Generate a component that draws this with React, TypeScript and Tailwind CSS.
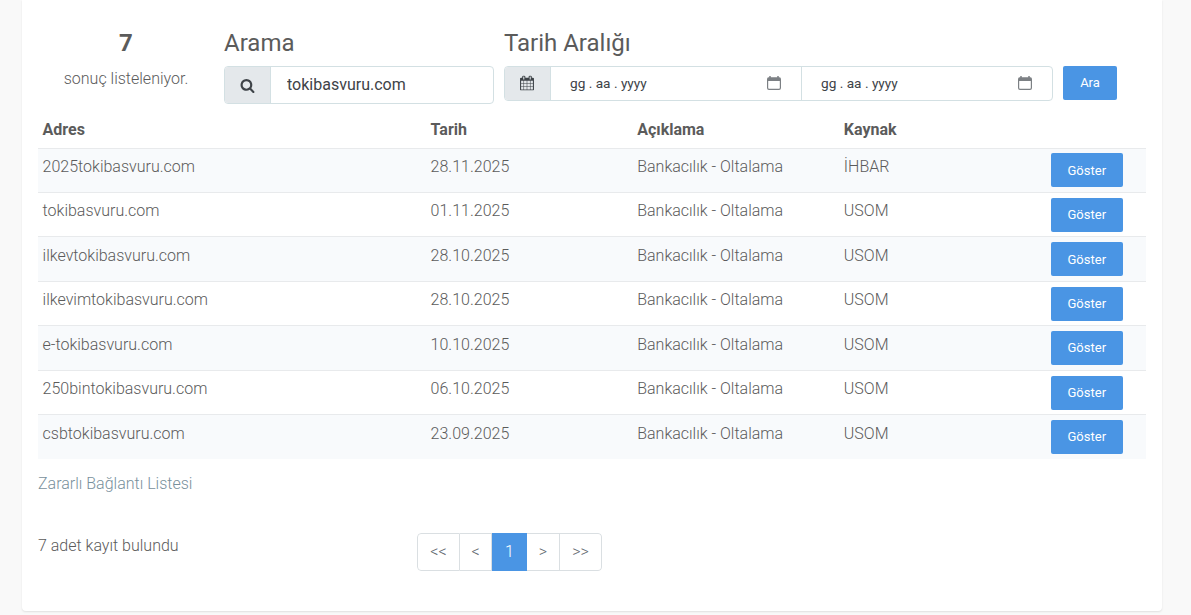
import React, { useState } from 'react';

const BLUE = 'bg-[#4a95e4]';

const rows = [
  { address: '2025tokibasvuru.com', date: '28.11.2025', source: 'İHBAR' },
  { address: 'tokibasvuru.com', date: '01.11.2025', source: 'USOM' },
  { address: 'ilkevtokibasvuru.com', date: '28.10.2025', source: 'USOM' },
  { address: 'ilkevimtokibasvuru.com', date: '28.10.2025', source: 'USOM' },
  { address: 'e-tokibasvuru.com', date: '10.10.2025', source: 'USOM' },
  { address: '250bintokibasvuru.com', date: '06.10.2025', source: 'USOM' },
  { address: 'csbtokibasvuru.com', date: '23.09.2025', source: 'USOM' },
];

const pages = [
  { label: '<<', width: 'w-[43px]' },
  { label: '<', width: 'w-8' },
  { label: '1', width: 'w-[35px]' },
  { label: '>', width: 'w-[33px]' },
  { label: '>>', width: 'w-[42px]' },
];

function SearchIcon() {
  return (
    <svg className="w-[15px] h-[15px]" viewBox="0 0 1792 1792" fill="currentColor">
      <path d="M1216 832q0-185-131.5-316.5T768 384 451.5 515.5 320 832t131.5 316.5T768 1280t316.5-131.5T1216 832zm512 832q0 52-38 90t-90 38q-54 0-90-38l-343-342q-179 124-399 124-143 0-273.5-55.5t-225-150-150-225T64 832t55.5-273.5 150-225 225-150T768 128t273.5 55.5 225 150 150 225T1472 832q0 220-124 399l343 343q37 37 37 90z" />
    </svg>
  );
}

function CalendarIcon() {
  return (
    <svg className="w-[15px] h-[15px] -translate-x-[0.5px] -translate-y-[0.5px]" viewBox="0 0 1792 1792" fill="currentColor">
      <path d="M192 1664h288v-288h-288v288zm352 0h320v-288h-320v288zm-352-352h288v-320h-288v320zm352 0h320v-320h-320v320zm-352-384h288v-288h-288v288zm736 736h320v-288h-320v288zm-384-736h320v-288h-320v288zm768 736h288v-288h-288v288zm-384-352h320v-320h-320v320zm-352-864v-288q0-13-9.5-22.5t-22.5-9.5h-64q-13 0-22.5 9.5t-9.5 22.5v288q0 13 9.5 22.5t22.5 9.5h64q13 0 22.5-9.5t9.5-22.5zm736 864h288v-320h-288v320zm-384-384h320v-288h-320v288zm384 0h288v-288h-288v288zm32-480v-288q0-13-9.5-22.5t-22.5-9.5h-64q-13 0-22.5 9.5t-9.5 22.5v288q0 13 9.5 22.5t22.5 9.5h64q13 0 22.5-9.5t9.5-22.5zm384-64v1280q0 52-38 90t-90 38h-1408q-52 0-90-38t-38-90v-1280q0-52 38-90t90-38h128v-96q0-66 47-113t113-47h64q66 0 113 47t47 113v96h384v-96q0-66 47-113t113-47h64q66 0 113 47t47 113v96h128q52 0 90 38t38 90z" />
    </svg>
  );
}

function DateField({ className }: { className: string }) {
  return (
    <div className={`flex h-full items-center justify-between pb-px pl-[19px] pr-5 text-[13.65px] text-[#3e4348] ${className}`}>
      <span>gg . aa . yyyy</span>
      <svg className="w-[14px] h-[14px] text-[#7c8084]" viewBox="0 0 14 14" fill="none" stroke="currentColor">
        <rect x="0.6" y="2" width="12.8" height="11.4" rx="1.4" strokeWidth="1.2" />
        <path d="M0.6 3.2h12.8" strokeWidth="3.6" />
        <path d="M3 0v2M11 0v2" strokeWidth="1.5" />
      </svg>
    </div>
  );
}

export default function App() {
  const [query, setQuery] = useState('tokibasvuru.com');

  return (
    <div className="h-[615px] overflow-hidden bg-[#f9f9f9] pl-[22px] font-['Roboto',sans-serif] text-base font-light text-[#5b5b5b]">
      <main className="h-[611px] w-[1140px] rounded-b bg-white px-4 pt-[25px] shadow-[0_1px_2px_rgba(0,0,0,0.1)]">
        <div className="flex h-[89px] items-start">
          <div className="w-[176px] text-center">
            <div className="text-2xl leading-9 font-bold">7</div>
            <div className="pt-1.5 leading-6">sonuç listeleniyor.</div>
          </div>

          <div className="ml-[10px] w-[270px]">
            <h2 className="h-[41px] text-2xl leading-9 font-normal">Arama</h2>
            <div className="flex h-[38px] overflow-hidden rounded border border-[#d3e0e3]">
              <span className="flex w-[46px] shrink-0 items-center justify-center border-r border-[#d3e0e3] bg-[#e4e8eb] text-[#3e4348]">
                <SearchIcon />
              </span>
              <input
                className="w-full pl-4 font-normal text-[#3e4348] outline-none"
                value={query}
                onChange={(e) => setQuery(e.target.value)}
              />
            </div>
          </div>

          <div className="ml-[10px] w-[549px]">
            <h2 className="h-[41px] text-2xl leading-9 font-normal">Tarih Aralığı</h2>
            <div className="flex h-[35px] items-center overflow-hidden rounded border border-[#d3e0e3] font-normal">
              <span className="flex h-full w-[46px] shrink-0 items-center justify-center border-r border-[#d3e0e3] bg-[#e4e8eb] text-[#3e4348]">
                <CalendarIcon />
              </span>
              <DateField className="w-[251px] border-r border-[#d3e0e3]" />
              <DateField className="w-[250px]" />
            </div>
          </div>

          <button className={`mt-[41px] ml-[10px] h-[34px] w-[54px] rounded-[2px] text-[13px] font-normal text-white ${BLUE}`}>
            Ara
          </button>
        </div>

        <table className="w-full table-fixed border-collapse">
          <colgroup>
            <col className="w-[388px]" />
            <col className="w-[206.6px]" />
            <col className="w-[206.6px]" />
            <col className="w-[206.8px]" />
            <col className="w-[100px]" />
          </colgroup>
          <thead>
            <tr className="h-[34px] text-left align-top font-bold">
              <th className="pt-1 pl-[4.6px]">Adres</th>
              <th className="pt-1 pl-[4.6px]">Tarih</th>
              <th className="pt-1 pl-[4.6px]">Açıklama</th>
              <th className="pt-1 pl-[4.6px]">Kaynak</th>
              <th />
            </tr>
          </thead>
          <tbody>
            {rows.map((row) => (
              <tr key={row.address} className="h-[44.45px] border-t border-[#e8eaec] align-top odd:bg-[#f8fafc]">
                <td className="pt-[6.4px] pl-[4.6px]">{row.address}</td>
                <td className="pt-[6.4px] pl-[4.6px]">{row.date}</td>
                <td className="pt-[6.4px] pl-[4.6px]">Bankacılık - Oltalama</td>
                <td className="pt-[6.4px] pl-[4.6px]">{row.source}</td>
                <td className="pt-[4.9px] pl-[4.8px]">
                  <button className={`block h-[34px] w-[72px] rounded-[2px] text-[13px] font-normal text-white ${BLUE}`}>
                    Göster
                  </button>
                </td>
              </tr>
            ))}
          </tbody>
        </table>

        <a href="#" className="mt-[13px] block leading-6 text-[#78909c]">
          Zararlı Bağlantı Listesi
        </a>

        <div className="mt-[37px] flex items-start">
          <div className="w-[379px] pt-px leading-6">7 adet kayıt bulundu</div>
          <div className="flex h-[38px] overflow-hidden rounded">
            {pages.map(({ label, width }) => (
              <button
                key={label}
                className={`${width} ${
                  label === '1'
                    ? `${BLUE} text-white`
                    : 'border-y border-r border-[#dadfe2] text-[#5f686f] first:rounded-l first:border-l last:rounded-r'
                }`}
              >
                {label}
              </button>
            ))}
          </div>
        </div>
      </main>
    </div>
  );
}
